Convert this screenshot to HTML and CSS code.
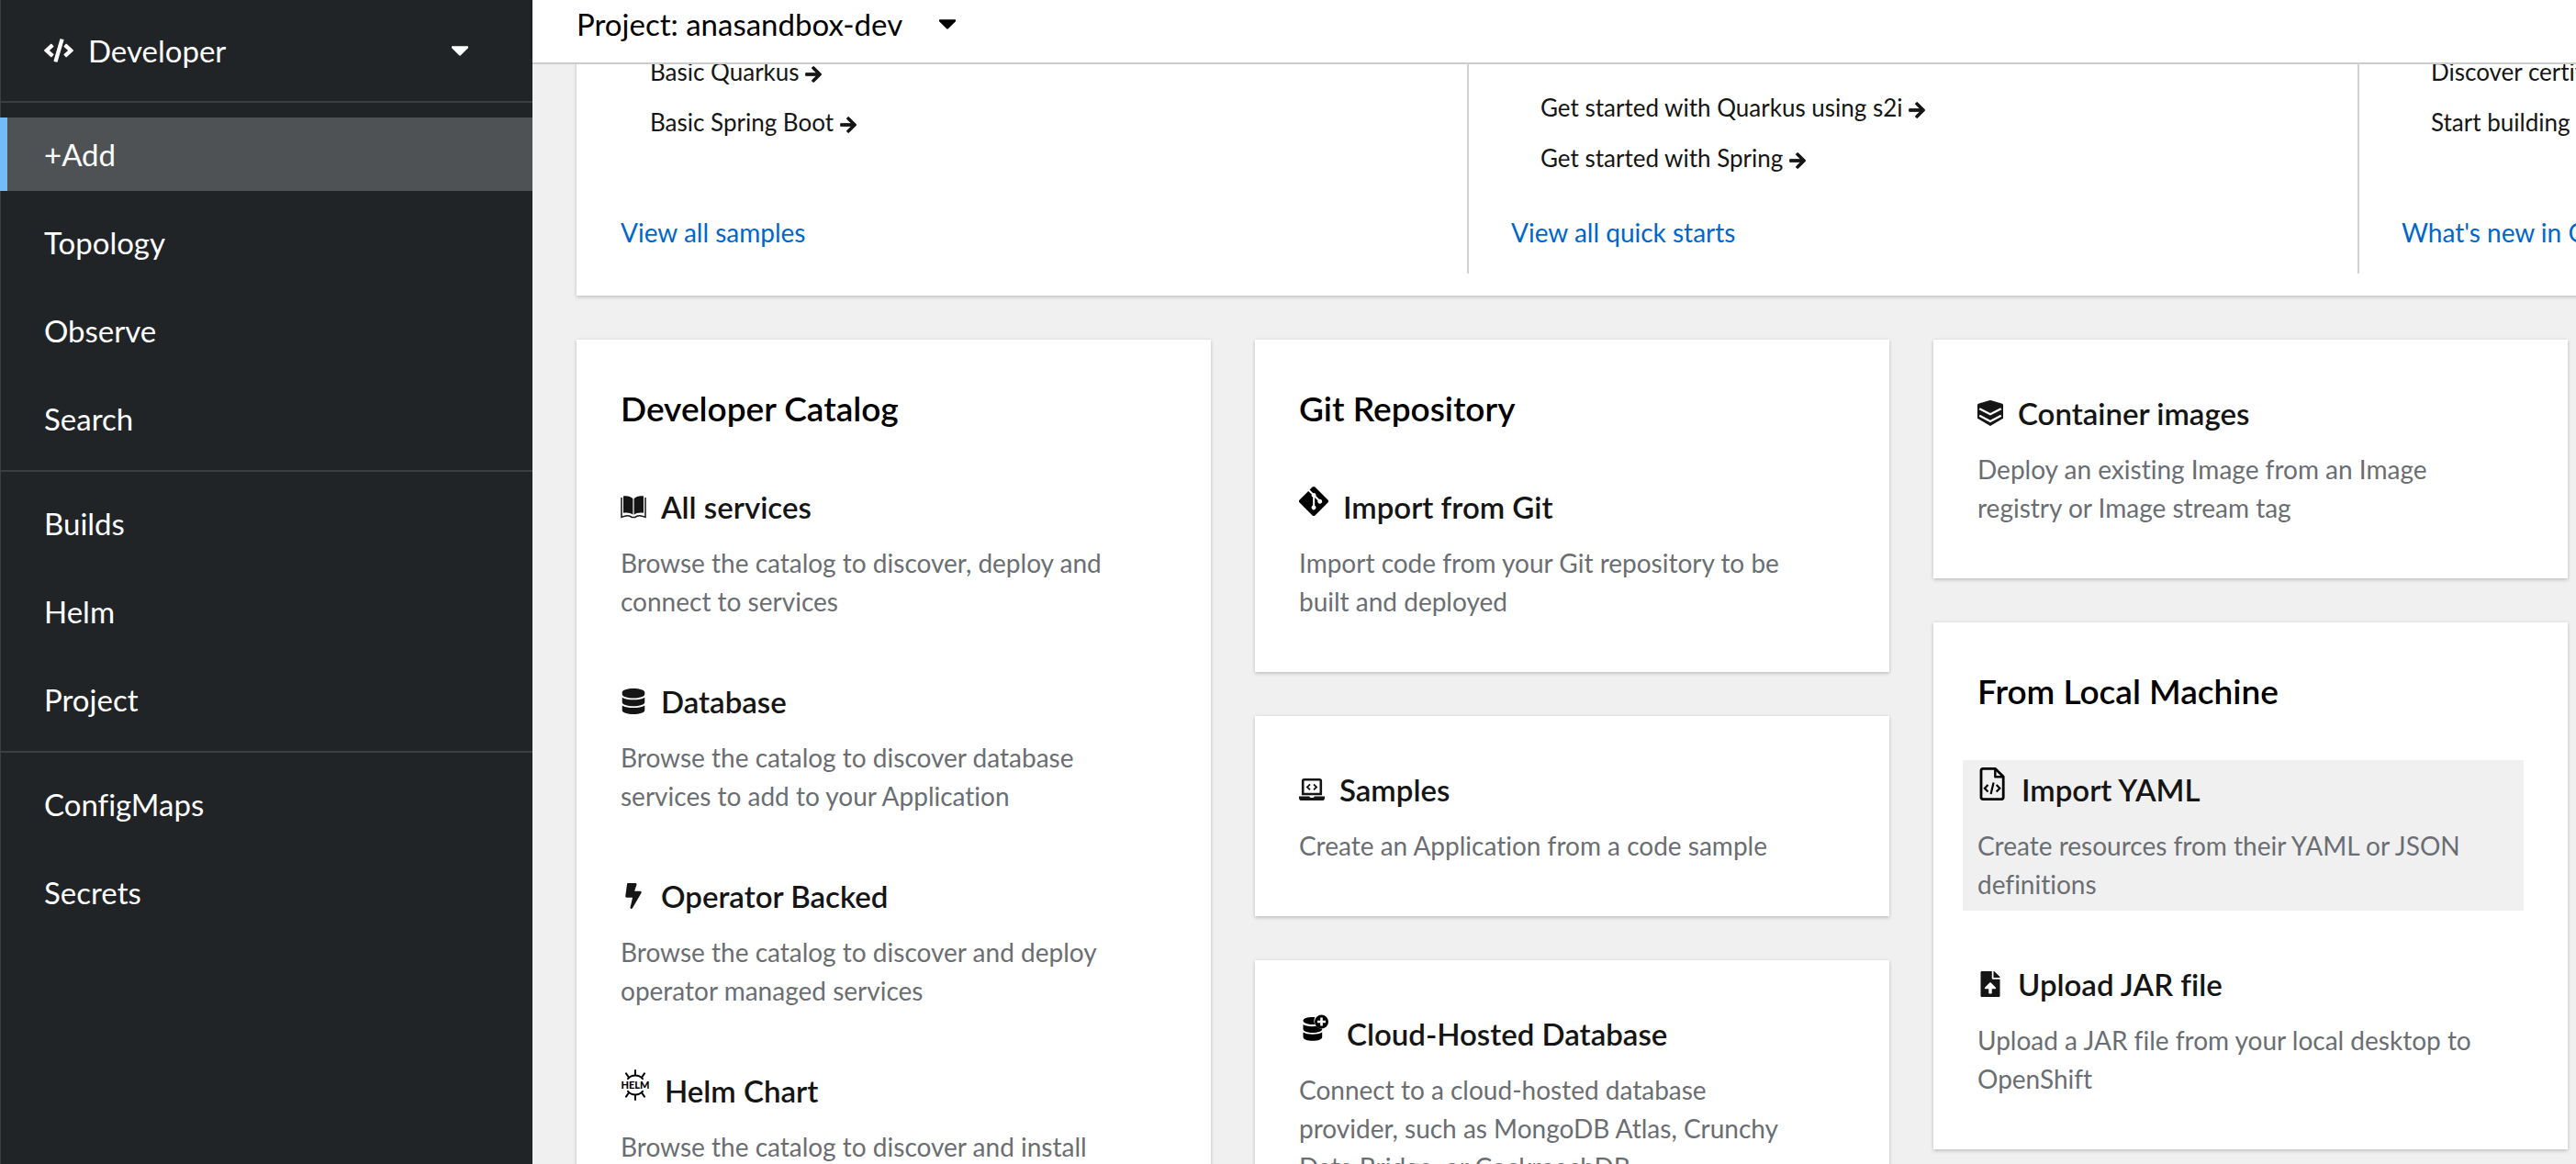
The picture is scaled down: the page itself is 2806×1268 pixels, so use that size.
FILE: index.html
```html
<!DOCTYPE html>
<html lang="en">
<head>
<meta charset="utf-8">
<title>+Add</title>
<meta name="viewport" content="width=device-width, initial-scale=1">
<link rel="stylesheet" href="styles.css">
</head>
<body>
<svg class="sprite" aria-hidden="true">
  <symbol id="arrow" viewBox="0 0 448 512"><path d="M190.5 66.9l22.2-22.2c9.4-9.4 24.6-9.4 33.9 0L441 239c9.4 9.4 9.4 24.6 0 33.9L246.6 467.3c-9.4 9.4-24.6 9.4-33.9 0l-22.2-22.2c-9.5-9.5-9.3-25 .4-34.3L311.4 296H24c-13.3 0-24-10.7-24-24v-32c0-13.3 10.7-24 24-24h287.4L190.9 101.2c-9.8-9.3-10-24.8-.4-34.3z" stroke="currentColor" stroke-width="20"/></symbol>
  <symbol id="caret" viewBox="16 192 288 170"><path d="M31.3 192h257.3c17.8 0 26.7 21.5 14.1 34.1L174.1 354.8c-7.8 7.8-20.5 7.8-28.3 0L17.2 226.1C4.6 213.5 13.5 192 31.3 192z"/></symbol>
</svg>
<div class="app">
  <aside class="sidebar">
    <button class="perspective" type="button">
      <svg class="perspective-icon" viewBox="0 0 640 512" aria-hidden="true"><path d="M278.9 511.5l-61-17.7c-6.4-1.8-10-8.5-8.2-14.9L346.2 8.7c1.8-6.4 8.5-10 14.9-8.2l61 17.7c6.4 1.8 10 8.5 8.2 14.9L293.8 503.3c-1.9 6.4-8.5 10.1-14.9 8.2zm-114-112.2l43.5-46.4c4.6-4.9 4.3-12.7-.8-17.2L117 256l90.6-79.7c5.1-4.5 5.5-12.3.8-17.2l-43.5-46.4c-4.5-4.8-12.1-5.1-17-.5L3.8 247.2c-5.1 4.7-5.1 12.8 0 17.5l144.1 135.1c4.9 4.6 12.5 4.4 17-.5zm327.2.6l144.1-135.1c5.1-4.7 5.1-12.8 0-17.5L492.1 112.1c-4.8-4.5-12.4-4.3-17 .5L431.6 159c-4.6 4.9-4.3 12.7.8 17.2L523 256l-90.6 79.7c-5.1 4.5-5.5 12.3-.8 17.2l43.5 46.4c4.5 4.9 12.1 5.1 17 .6z"/></svg>
      <span class="perspective-name">Developer</span>
      <svg class="caret" aria-hidden="true"><use href="#caret"/></svg>
    </button>
    <nav>
      <ul class="nav-section">
        <li><a class="nav-link current" href="#add" aria-current="page">+Add</a></li>
        <li><a class="nav-link" href="#topology">Topology</a></li>
        <li><a class="nav-link" href="#observe">Observe</a></li>
        <li><a class="nav-link" href="#search">Search</a></li>
      </ul>
      <ul class="nav-section">
        <li><a class="nav-link" href="#builds">Builds</a></li>
        <li><a class="nav-link" href="#helm">Helm</a></li>
        <li><a class="nav-link" href="#project">Project</a></li>
      </ul>
      <ul class="nav-section">
        <li><a class="nav-link" href="#configmaps">ConfigMaps</a></li>
        <li><a class="nav-link" href="#secrets">Secrets</a></li>
      </ul>
    </nav>
  </aside>

  <main class="main">
    <header class="project-bar">
      <button class="project-select" type="button">Project: anasandbox-dev
        <svg class="caret" aria-hidden="true"><use href="#caret"/></svg>
      </button>
    </header>

    <div class="page">
      <section class="getting-started">
        <div class="start-col">
          <ul class="start-list">
            <li><a href="#quarkus">Basic Quarkus <svg class="arrow" aria-hidden="true"><use href="#arrow"/></svg></a></li>
            <li><a href="#spring-boot">Basic Spring Boot <svg class="arrow" aria-hidden="true"><use href="#arrow"/></svg></a></li>
          </ul>
          <a class="view-all" href="#samples">View all samples</a>
        </div>
        <div class="start-col">
          <ul class="start-list indented">
            <li><a href="#quarkus-s2i">Get started with Quarkus using s2i <svg class="arrow" aria-hidden="true"><use href="#arrow"/></svg></a></li>
            <li><a href="#spring">Get started with Spring <svg class="arrow" aria-hidden="true"><use href="#arrow"/></svg></a></li>
          </ul>
          <a class="view-all" href="#quick-starts">View all quick starts</a>
        </div>
        <div class="start-col">
          <ul class="start-list">
            <li><a href="#certified">Discover certified</a></li>
            <li><a href="#building">Start building</a></li>
          </ul>
          <a class="view-all" href="#whats-new">What's new in OpenShift</a>
        </div>
      </section>

      <div class="catalog">
        <div class="stack">
          <section class="card">
            <h2 class="card-title">Developer Catalog</h2>
            <a class="item" href="#all-services">
              <h3 class="item-title">
                <svg class="icon" viewBox="0 0 28 28" aria-hidden="true"><path d="M3 2.600C7 1.800 11 2.800 13.400 5.200V22.800C11 20.600 7 20 3 20.800zM25 2.600C21 1.800 17 2.800 14.600 5.200V22.800C17 20.600 21 20 25 20.800z"/><path d="M1 4v21.400c4-1.800 9-2.200 11.400.200h3.200c2.400-2.400 7.400-2 11.400-.200V4" fill="none" stroke="currentColor" stroke-width="1.500"/></svg>
                All services
              </h3>
              <p class="item-text">Browse the catalog to discover, deploy and connect to services</p>
            </a>
            <a class="item" href="#database">
              <h3 class="item-title">
                <svg class="icon" viewBox="0 0 448 512" aria-hidden="true"><path d="M448 73.143v45.714C448 159.143 347.667 192 224 192S0 159.143 0 118.857V73.143C0 32.857 100.333 0 224 0s224 32.857 224 73.143zM448 176v102.857C448 319.143 347.667 352 224 352S0 319.143 0 278.857V176c48.125 33.143 136.208 48.572 224 48.572S399.874 209.143 448 176zm0 160v102.857C448 479.143 347.667 512 224 512S0 479.143 0 438.857V336c48.125 33.143 136.208 48.572 224 48.572S399.874 369.143 448 336z"/></svg>
                Database
              </h3>
              <p class="item-text">Browse the catalog to discover database services to add to your Application</p>
            </a>
            <a class="item" href="#operator-backed">
              <h3 class="item-title">
                <svg class="icon" viewBox="0 0 320 512" aria-hidden="true"><path d="M296 160H180.600l42.600-129.800C227.200 15 215.700 0 200 0H56C44 0 33.800 8.900 32.200 20.800l-32 240C-1.700 275.200 9.500 288 24 288h118.700L96.600 482.500c-3.600 15.200 8 29.500 23.300 29.500 8.400 0 16.400-4.400 20.800-12l176-304c9.300-15.900-2.200-36-20.700-36z"/></svg>
                Operator Backed
              </h3>
              <p class="item-text">Browse the catalog to discover and deploy operator managed services</p>
            </a>
            <a class="item" href="#helm-chart">
              <h3 class="item-title">
                <svg class="icon icon-wide" viewBox="0 0 32 36" aria-hidden="true"><g fill="none" stroke="currentColor" stroke-width="2" stroke-linecap="round"><path d="M8 11.200a10.600 10.600 0 0 1 16 0M16 7.600V2M9.200 10 6 5.400M22.800 10 26 5.400M8 24.800a10.600 10.600 0 0 0 16 0M16 28.400V34M9.200 26 6 30.600M22.800 26 26 30.600"/></g><text class="helm-word" x="16" y="21.500" text-anchor="middle">HELM</text></svg>
                Helm Chart
              </h3>
              <p class="item-text">Browse the catalog to discover and install Helm Charts</p>
            </a>
          </section>
        </div>

        <div class="stack">
          <section class="card">
            <h2 class="card-title">Git Repository</h2>
            <a class="item" href="#import-git">
              <h3 class="item-title">
                <svg class="icon icon-wide" viewBox="0 32 448 448" aria-hidden="true"><path d="M439.550 236.050L244 40.450a28.870 28.870 0 0 0-40.810 0l-40.660 40.630 51.520 51.520c27.060-9.140 52.680 16.770 43.390 43.680l49.660 49.660c34.230-11.800 61.180 31 35.470 56.690-26.490 26.490-70.210-2.870-56-37.340L240.220 199v121.850c25.300 12.540 22.260 41.850 9.080 55a34.340 34.340 0 0 1-48.550 0c-17.570-17.600-11.070-46.910 11.250-56v-123c-20.800-8.510-24.600-30.740-18.640-45L142.570 101 8.450 235.140a28.860 28.860 0 0 0 0 40.810l195.610 195.600a28.860 28.860 0 0 0 40.800 0l194.690-194.690a28.860 28.860 0 0 0 0-40.810z"/></svg>
                Import from Git
              </h3>
              <p class="item-text">Import code from your Git repository to be built and deployed</p>
            </a>
          </section>
          <section class="card">
            <a class="item" href="#code-samples">
              <h3 class="item-title">
                <svg class="icon" viewBox="0 0 28 28" aria-hidden="true"><path d="M4.200 19V4.700q0-1.500 1.500-1.500h16.600q1.500 0 1.500 1.500V19z" fill="none" stroke="currentColor" stroke-width="2.600"/><path d="M0 21.600h11.200q.4 1.400 1.600 1.400h2.400q1.200 0 1.600-1.400H28v1.600q0 2.800-2.800 2.800H2.800Q0 26 0 23.200z"/><path d="m12 8.400-3 3 3 3M16 8.400l3 3-3 3" fill="none" stroke="currentColor" stroke-width="1.900"/></svg>
                Samples
              </h3>
              <p class="item-text">Create an Application from a code sample</p>
            </a>
          </section>
          <section class="card">
            <a class="item" href="#cloud-database">
              <h3 class="item-title">
                <svg class="icon icon-widest" viewBox="0 0 36 36" aria-hidden="true"><path d="M4.500 9.800C4.500 7.400 9 6 15 6q1.300 0 2.400.100a9 9 0 0 0-.2 7.800q-1 .1-2.200.1c-6 0-10.500-1.700-10.500-4.200zM4.500 14c3 2 9 2.600 14.200 1.800a8.500 8.500 0 0 0 6.500 3v.2c0 2.400-4.500 4-10.300 4S4.500 21.400 4.500 19zM4.500 22.500c5 3 15.700 3 20.700 0v5.200c0 2.400-4.500 4.100-10.300 4.100s-10.400-1.700-10.400-4.100z"/><circle cx="24.500" cy="11" r="7.500"/><path d="M24.500 6.500v9M20 11h9" stroke="#fff" stroke-width="2.600"/></svg>
                Cloud-Hosted Database
              </h3>
              <p class="item-text">Connect to a cloud-hosted database provider, such as MongoDB Atlas, Crunchy Data Bridge, or CockroachDB</p>
            </a>
          </section>
        </div>

        <div class="stack">
          <section class="card">
            <a class="item" href="#container-images">
              <h3 class="item-title">
                <svg class="icon" viewBox="0 0 28 28" aria-hidden="true"><path d="M12.800.200q1.200-.4 2.400 0L27 3.800q1 .4 1 1.400v14.600L14 28 0 19.800V5.200q0-1 1-1.400z"/><path d="M2.200 9.200 14 15.200 25.800 9.200M2.200 16.800 14 23 25.800 16.800" fill="none" stroke="#fff" stroke-width="2.400"/></svg>
                Container images
              </h3>
              <p class="item-text">Deploy an existing Image from an Image registry or Image stream tag</p>
            </a>
          </section>
          <section class="card">
            <h2 class="card-title">From Local Machine</h2>
            <a class="item active" href="#import-yaml">
              <h3 class="item-title">
                <svg class="icon icon-wide" viewBox="0 0 32 36" aria-hidden="true"><g fill="none" stroke="currentColor" stroke-width="2.800" stroke-linejoin="round"><path d="M6 1.400h13.500l8.700 8.700v22.500q0 2-2 2H6q-2 0-2-2V3.400q0-2 2-2z"/><path d="M19.300 1.500v8.700h8.700" stroke-width="2.400"/></g><path d="m11.500 19-3.600 3.800 3.600 3.800M20.700 19l3.600 3.800-3.600 3.800M17.600 16.500l-3 12.500" fill="none" stroke="currentColor" stroke-width="2.200"/></svg>
                Import YAML
              </h3>
              <p class="item-text">Create resources from their YAML or JSON definitions</p>
            </a>
            <a class="item" href="#upload-jar">
              <h3 class="item-title">
                <svg class="icon" viewBox="0 0 384 512" aria-hidden="true"><path d="M224 136V0H24C10.700 0 0 10.700 0 24v464c0 13.300 10.700 24 24 24h336c13.300 0 24-10.700 24-24V160H248c-13.200 0-24-10.800-24-24zm65.180 216.010H224v80c0 8.840-7.160 16-16 16h-32c-8.840 0-16-7.160-16-16v-80H94.820c-14.280 0-21.410-17.290-11.270-27.360l96.420-95.700c6.650-6.610 17.390-6.610 24.040 0l96.420 95.700c10.150 10.070 3.030 27.360-11.250 27.360zM377 105L279.100 7c-4.500-4.500-10.600-7-17-7H256v128h128v-6.100c0-6.300-2.500-12.400-7-16.900z"/></svg>
                Upload JAR file
              </h3>
              <p class="item-text">Upload a JAR file from your local desktop to OpenShift</p>
            </a>
          </section>
        </div>
      </div>
    </div>
  </main>
</div>
</body>
</html>
```
FILE: styles.css
```css
* { box-sizing: border-box; }

html, body { height: 100%; }

body {
  margin: 0;
  overflow: hidden;
  background: #f0f0f0;
  color: #151515;
  font-family: Lato, "Liberation Sans", sans-serif;
  font-size: 28px;
  font-variant-ligatures: none;
  line-height: 42px;
}

ul, h2, h3, p { margin: 0; padding: 0; }
ul { list-style: none; }
a { color: inherit; text-decoration: none; }
svg { flex: none; fill: currentColor; }
.sprite { display: none; }

button {
  border: 0;
  background: none;
  color: inherit;
  font: inherit;
  text-align: left;
}

.app { display: flex; height: 100vh; }

/* Sidebar */
.sidebar {
  flex: 0 0 580px;
  border-left: 1px solid #3c3f42;
  background: #212427;
  color: #fff;
  font-size: 33px;
  line-height: 48px;
}

.perspective {
  display: flex;
  align-items: center;
  gap: 16px;
  width: 100%;
  height: 110px;
  padding: 0 70px 0 47px;
}
.perspective-icon { width: 32px; height: 26px; }
.perspective-name { flex: 1; }
.caret { width: 18px; height: 11px; }

.nav-section {
  display: grid;
  gap: 16px;
  padding: 16px 0;
  border-top: 2px solid #3c3f42;
}
.nav-link { display: block; margin-left: -1px; padding: 16px 48px; }
.current {
  padding-left: 40px;
  border-left: 8px solid #73bcf7;
  background: #4f5255;
}

/* Main area */
.main {
  display: flex;
  flex: 1;
  flex-direction: column;
  min-width: 0;
}

.project-bar {
  flex: none;
  padding: 2px 48px 18px;
  border-bottom: 2px solid #ccc;
  background: #fff;
}
.project-select {
  display: flex;
  align-items: center;
  gap: 40px;
  padding: 0;
  color: #000;
  font-size: 33px;
  line-height: 48px;
}

.page {
  flex: 1;
  min-height: 0;
  padding-left: 48px;
  overflow: hidden;
}

.getting-started {
  display: grid;
  grid-template-columns: repeat(3, minmax(970px, 1fr));
  width: max-content;
  min-width: 100%;
  margin-top: -11px;
  padding-bottom: 24px;
  background: #fff;
  box-shadow: 0 2px 4px rgba(0, 0, 0, .16), 0 0 4px rgba(0, 0, 0, .08);
}
.start-col {
  display: flex;
  flex-direction: column;
  justify-content: space-between;
  gap: 40px;
  padding: 0 48px 24px;
}
.start-col + .start-col { padding-left: 46px; border-left: 2px solid #d2d2d2; }
.start-list {
  display: grid;
  gap: 16px;
  padding-left: 32px;
  font-size: 26px;
  line-height: 39px;
}
.indented { padding-top: 39px; }
.arrow { width: 18px; height: 20px; vertical-align: -3px; }
.view-all { color: #06c; }

/* Catalog cards */
.catalog {
  display: grid;
  grid-template-columns: repeat(3, 1fr);
  align-items: start;
  gap: 48px;
  padding: 48px 9px 48px 0;
}
.stack { display: grid; gap: 48px; }
.card {
  display: grid;
  gap: 48px;
  padding: 48px 48px 48px 32px;
  background: #fff;
  box-shadow: 0 2px 4px rgba(0, 0, 0, .16), 0 0 4px rgba(0, 0, 0, .08);
}
.card-title {
  padding-left: 16px;
  color: #000;
  font-size: 37px;
  font-weight: 600;
  line-height: 54px;
}
.item { display: block; padding: 8px 48px 8px 16px; }
.active { background: #f0f0f0; }
.item-title {
  display: flex;
  align-items: center;
  gap: 16px;
  height: 48px;
  margin-bottom: 16px;
  font-size: 33px;
  font-weight: 600;
  line-height: 48px;
}
.item-text { color: #6a6e73; }

.icon { width: 28px; height: 28px; }
.icon-wide, .icon-widest { margin-bottom: 12px; color: #000; }
.icon-wide { width: 32px; height: 36px; }
.icon-widest { width: 36px; height: 36px; }
.helm-word { font-size: 11px; font-weight: 900; }
```
